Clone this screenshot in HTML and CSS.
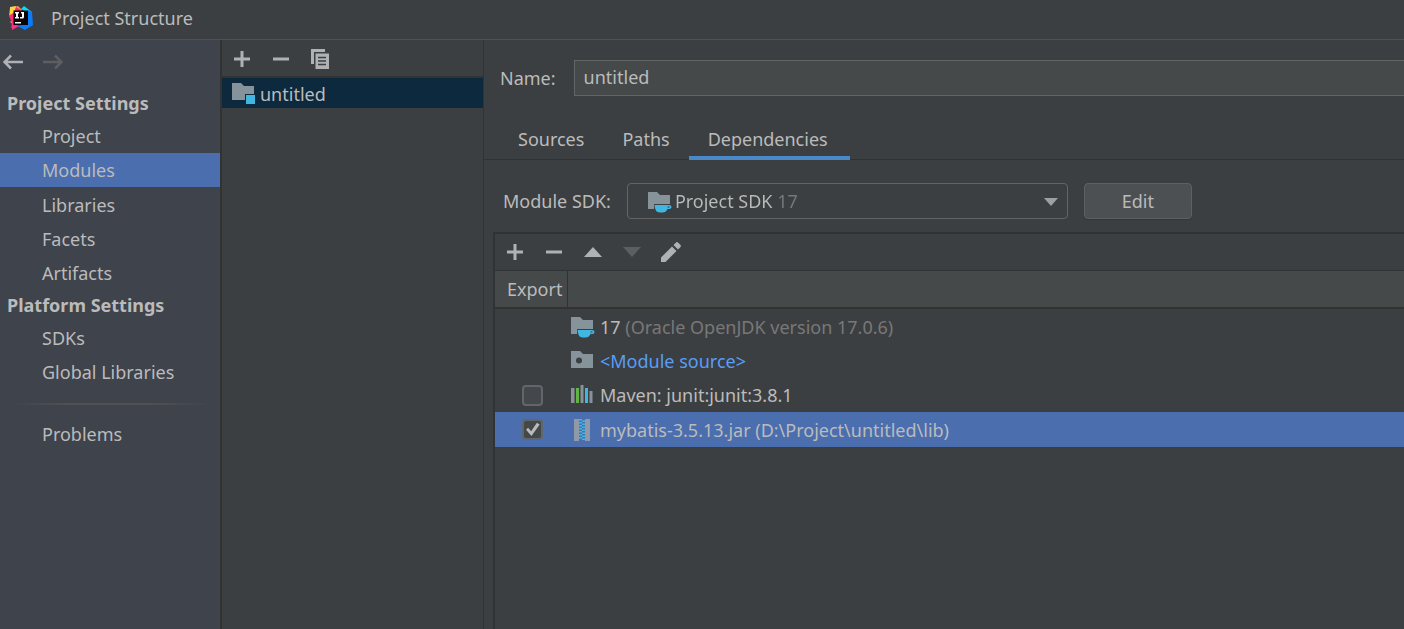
FILE: index.html
```html
<!DOCTYPE html>
<html lang="en">
<head>
<meta charset="utf-8">
<title>Project Structure</title>
<link rel="stylesheet" href="styles.css">
</head>
<body>
<svg class="defs" aria-hidden="true">
  <symbol id="plus" viewBox="0 0 16 16"><path d="M6.500 0h3v6.500H16v3H9.500V16h-3V9.500H0v-3h6.500z" fill="currentColor"/></symbol>
  <symbol id="minus" viewBox="0 0 16 16"><path d="M0 6.500h16v3H0z" fill="currentColor"/></symbol>
  <symbol id="folder-sdk" viewBox="0 0 24 22"><path d="M0 1h9l3 3h10v9H6v5H0z" fill="#87939a"/><path d="M6.500 14h14.500q2.500 0 2.500 2t-3 2h-1q-1.500 3.500-5 3.500h-3q-4.500 0-5-7.500z" fill="#40b6e0"/><path d="M19.500 15.500h2v1h-2z" fill="#3c3f41"/></symbol>
</svg>
<header class="titlebar">
  <svg class="logo" viewBox="0 0 24 24" aria-hidden="true">
    <path d="M1 2 9 0l4 4-7 16-5-4 3-3-4-4z" fill="#ff9a3d"/>
    <path d="M7 1 12 4 5 21l-3 1 1-5-3-7 3-2z" fill="#fc2e72"/>
    <path d="m1 1 6-1-2 7-4 1z" fill="#fcd44a"/>
    <path d="m12 3 3-3 8 6-1 9-3-8z" fill="#11d5f2"/>
    <path d="m19 4 4 2 1 13-8 5-8-4 10-2z" fill="#087cfa"/>
    <path d="m3 17 7 3-7 4z" fill="#fc318c"/>
    <path d="M4.500 4.500h14.500v14.500H4.500z" fill="#0b0508"/>
    <path d="M6 6h4v1.500H9V11h1v1.500H6V11h1V7.500H6zM12 6h3v5q0 1.500-1.500 1.500H11V11h2V7.500h-1zM6 16h6v1.500H6z" fill="#fff"/>
  </svg>
  <h1 class="title">Project Structure</h1>
</header>
<main class="layout">
  <aside class="sidebar">
    <div class="history">
      <button class="icon-btn" aria-label="Back"><svg width="20" height="16" viewBox="0 0 20 16"><path d="M8 1.500 1.500 8 8 14.500M1.500 8H20" fill="none" stroke="#afb1b3" stroke-width="2.500"/></svg></button>
      <button class="icon-btn" aria-label="Forward" disabled><svg width="20" height="16" viewBox="0 0 20 16"><path d="M12 1.500 18.500 8 12 14.500M18.500 8H0" fill="none" stroke="#5c5e60" stroke-width="2.500"/></svg></button>
    </div>
    <nav class="nav">
      <h2 class="nav-heading">Project Settings</h2>
      <a class="nav-item" href="#">Project</a>
      <a class="nav-item selected" href="#" aria-current="page">Modules</a>
      <a class="nav-item" href="#">Libraries</a>
      <a class="nav-item" href="#">Facets</a>
      <a class="nav-item" href="#">Artifacts</a>
      <h2 class="nav-heading">Platform Settings</h2>
      <a class="nav-item" href="#">SDKs</a>
      <a class="nav-item" href="#">Global Libraries</a>
      <hr class="nav-separator">
      <a class="nav-item" href="#">Problems</a>
    </nav>
  </aside>
  <section class="modules">
    <div class="toolbar">
      <button class="icon-btn" aria-label="Add"><svg width="16" height="16"><use href="#plus"/></svg></button>
      <button class="icon-btn" aria-label="Remove"><svg width="16" height="16"><use href="#minus"/></svg></button>
      <button class="icon-btn" aria-label="Copy"><svg width="18" height="20" viewBox="0 0 18 20"><path d="M0 0h14v3H3v12H0z" fill="#afb1b3"/><path d="M4.500 4.500H18V20H4.500z" fill="#afb1b3"/><path d="M7 8.500h8M7 12h8M7 15.500h8" stroke="#3c3f41" stroke-width="1.500"/></svg></button>
    </div>
    <a class="module" href="#">
      <svg width="24" height="22" viewBox="0 0 24 22" aria-hidden="true"><path d="M0 0h9l3 3h10v8h-9v6H0z" fill="#87939a"/><path d="M14 12h9v9h-9z" fill="#40b6e0"/></svg>
      <span>untitled</span>
    </a>
  </section>
  <section class="editor">
    <div class="name-row">
      <label for="name">Name:</label>
      <input class="name-input" id="name" type="text" value="untitled">
    </div>
    <div class="tabs" role="tablist">
      <button class="tab" role="tab">Sources</button>
      <button class="tab" role="tab">Paths</button>
      <button class="tab active" role="tab" aria-selected="true">Dependencies</button>
    </div>
    <div class="sdk-row">
      <label for="sdk">Module SDK:</label>
      <div class="combo">
        <svg class="combo-icon" width="24" height="22" aria-hidden="true"><use href="#folder-sdk"/></svg>
        <select class="combo-select" id="sdk"><option>Project SDK 17</option></select>
        <svg class="combo-arrow" width="14" height="8" viewBox="0 0 14 8" aria-hidden="true"><path d="M0 0h14L7 8z" fill="#9da0a2"/></svg>
      </div>
      <button class="edit">Edit</button>
    </div>
    <div class="panel">
      <div class="toolbar">
        <button class="icon-btn" aria-label="Add"><svg width="16" height="16"><use href="#plus"/></svg></button>
        <button class="icon-btn" aria-label="Remove"><svg width="16" height="16"><use href="#minus"/></svg></button>
        <button class="icon-btn" aria-label="Move up"><svg width="18" height="10" viewBox="0 0 18 10"><path d="M0 10 9 0l9 10z" fill="#afb1b3"/></svg></button>
        <button class="icon-btn" aria-label="Move down" disabled><svg width="18" height="10" viewBox="0 0 18 10"><path d="M0 0h18L9 10z" fill="#5c5e60"/></svg></button>
        <button class="icon-btn" aria-label="Edit"><svg width="20" height="20" viewBox="0 0 20 20"><path d="M0 15.500 11 4.500l4.500 4.500-11 11H0zM12.500 3l2.300-2.300q1.200-1.200 2.400 0l2.100 2.100q1.200 1.200 0 2.400L17 7.500z" fill="#afb1b3"/></svg></button>
      </div>
      <table class="deps">
        <colgroup><col class="col-export"><col></colgroup>
        <thead><tr><th>Export</th><th aria-label="Dependency"></th></tr></thead>
        <tbody>
          <tr><td></td><td><div class="dep"><svg width="24" height="22" aria-hidden="true"><use href="#folder-sdk"/></svg><span>17 <span class="muted">(Oracle OpenJDK version 17.0.6)</span></span></div></td></tr>
          <tr><td></td><td><div class="dep"><svg width="24" height="22" viewBox="0 0 24 22" aria-hidden="true"><path d="M0 1h9l3 3h10v14H0z" fill="#87939a"/><circle cx="8" cy="10.500" r="3" fill="#3c3f41"/></svg><span class="source">&lt;Module source&gt;</span></div></td></tr>
          <tr><td><input class="check" type="checkbox" aria-label="Export Maven: junit:junit:3.8.1"></td><td><div class="dep"><svg width="24" height="22" viewBox="0 0 24 22" aria-hidden="true"><path d="M0 4h3.500v15H0zM9.500 1h3v18h-3zM18.500 7h3v12h-3z" fill="#87939a"/><path d="M5 4h3v15H5z" fill="#62b543"/><path d="M14 4h3v15h-3z" fill="#40b6e0"/></svg><span>Maven: junit:junit:3.8.1</span></div></td></tr>
          <tr class="selected"><td><input class="check" type="checkbox" checked aria-label="Export mybatis-3.5.13.jar"></td><td><div class="dep"><svg width="24" height="22" viewBox="0 0 24 22" aria-hidden="true"><path d="M3 0h5v22H3zM14 0h5v22h-5z" fill="#9099a8"/><path d="M8 0h3v1.500H8zM11 1.500h3V3h-3zM8 3h3v1.500H8zM11 4.500h3V6h-3zM8 6h3v1.500H8zM11 7.500h3V9h-3zM8 9h3v1.500H8zM11 10.500h3V12h-3zM8 12h3v1.500H8zM11 13.500h3V15h-3zM8 15h3v1.500H8zM11 16.500h3V18h-3zM8 18h3v1.500H8zM11 19.500h3V21h-3z" fill="#40b6e0"/></svg><span>mybatis-3.5.13.jar (D:\Project\untitled\lib)</span></div></td></tr>
        </tbody>
      </table>
    </div>
  </section>
</main>
</body>
</html>
```
FILE: styles.css
```css
* { box-sizing: border-box; }
body {
  margin: 0;
  min-height: 100vh;
  display: flex;
  flex-direction: column;
  overflow: hidden;
  background: #3c3f41;
  color: #bbbbbb;
  font: 18px/24px "Noto Sans", sans-serif;
}
button, input, select { font: inherit; color: inherit; }
button { cursor: pointer; }
svg { display: block; flex: none; }
a { color: inherit; text-decoration: none; }
.defs { position: absolute; width: 0; height: 0; }

.titlebar {
  display: flex;
  align-items: center;
  gap: 18px;
  height: 40px;
  padding: 0 9px 3px;
  border-bottom: 1px solid #515151;
}
.logo { width: 24px; height: 24px; }
.title { margin: 0; font-size: 18px; font-weight: 400; }

.layout { flex: 1; display: flex; }
.icon-btn {
  display: flex;
  align-items: center;
  justify-content: center;
  width: 24px;
  height: 24px;
  padding: 0;
  border: 0;
  background: none;
  color: #afb1b3;
}

.sidebar { flex: none; width: 222px; background: #3e434c; border-right: 2px solid #323232; }
.history { display: flex; gap: 16px; padding: 10px 1px 14px; }
.nav-heading { margin: 0; padding: 0 7px; font-size: 18px; line-height: 31px; font-weight: 700; }
.nav-item { display: block; padding-left: 42px; line-height: 34px; }
.nav-item.selected { background: #4b6eaf; }
.nav-item.selected + .nav-item { padding-top: 1px; }
.nav-separator {
  height: 2px;
  margin: 14px 8px 12px;
  border: 0;
  background: linear-gradient(90deg, transparent, #515151 30%, #515151 70%, transparent);
}

.toolbar { display: flex; align-items: center; gap: 15px; height: 36px; padding-left: 8px; }
.modules { flex: none; width: 262px; border-right: 1px solid #323232; }
.modules .toolbar { height: 38px; padding-top: 2px; border-bottom: 2px solid #323232; }
.module { display: flex; align-items: center; gap: 4px; height: 30px; padding: 2px 0 0 10px; background: #0d293e; }

.editor { flex: 1; min-width: 0; display: flex; flex-direction: column; }
.name-row { display: flex; align-items: center; gap: 18px; padding: 20px 0 22px 16px; }
.name-input {
  flex: 1;
  min-width: 0;
  height: 36px;
  padding: 0 9px 2px;
  border: 1px solid #646464;
  border-right: 0;
  background: #45494a;
}
.tabs { display: flex; padding-left: 15px; border-bottom: 1px solid #323232; }
.tab { height: 42px; padding: 3px 19px 0; margin-bottom: -1px; border: 0; border-bottom: 4px solid transparent; background: none; }
.tab.active { padding-right: 22px; border-color: #4a88c7; }
.sdk-row { display: flex; align-items: center; gap: 16px; padding: 23px 0 13px 19px; }
.combo { position: relative; width: 441px; }
.combo-select {
  display: block;
  width: 100%;
  height: 36px;
  padding: 0 24px 0 48px;
  appearance: none;
  border: 0;
  outline: 1px solid #646464;
  outline-offset: -1px;
  border-radius: 4px;
  background: linear-gradient(90deg, #bbbbbb 148px, #787878 148px);
  background-clip: text;
  -webkit-text-fill-color: transparent;
}
.combo-icon { position: absolute; left: 21px; top: 8px; }
.combo-arrow { position: absolute; right: 10px; top: 15px; }
.edit {
  width: 108px;
  height: 36px;
  border: 1px solid #5e6060;
  border-radius: 4px;
  background: #4c5052;
  box-shadow: 0 1px 1px #353739;
}

.panel { flex: 1; margin-left: 9px; border: solid #323232; border-width: 2px 0 0 2px; }
.deps { width: 100%; border-collapse: separate; border-spacing: 0; table-layout: fixed; }
.col-export { width: 73px; }
.deps th {
  height: 39px;
  padding: 0 0 0 12px;
  border-top: 1px solid #323232;
  border-bottom: 2px solid #323232;
  background: #45494a;
  font-weight: 400;
  text-align: left;
}
.deps th:first-child { border-right: 1px solid #323232; }
.deps td { height: 34px; padding: 0; }
.deps tr:first-child td, .deps tr.selected td { height: 35px; }
.deps tr.selected td { background: #4b6eaf; }
.dep { display: flex; align-items: center; gap: 5px; padding-left: 3px; white-space: nowrap; }
.muted { color: #787878; }
.source { color: #589df6; }
.check {
  display: block;
  width: 21px;
  height: 21px;
  margin: 0 0 0 27px;
  appearance: none;
  border: 2px solid #62666a;
  border-radius: 4px;
  background: #43494a;
}
.check:checked::before {
  content: "";
  display: block;
  width: 17px;
  height: 17px;
  background: #bbbbbb;
  clip-path: polygon(12% 52%, 24% 40%, 42% 60%, 76% 10%, 92% 20%, 44% 88%);
}
```
